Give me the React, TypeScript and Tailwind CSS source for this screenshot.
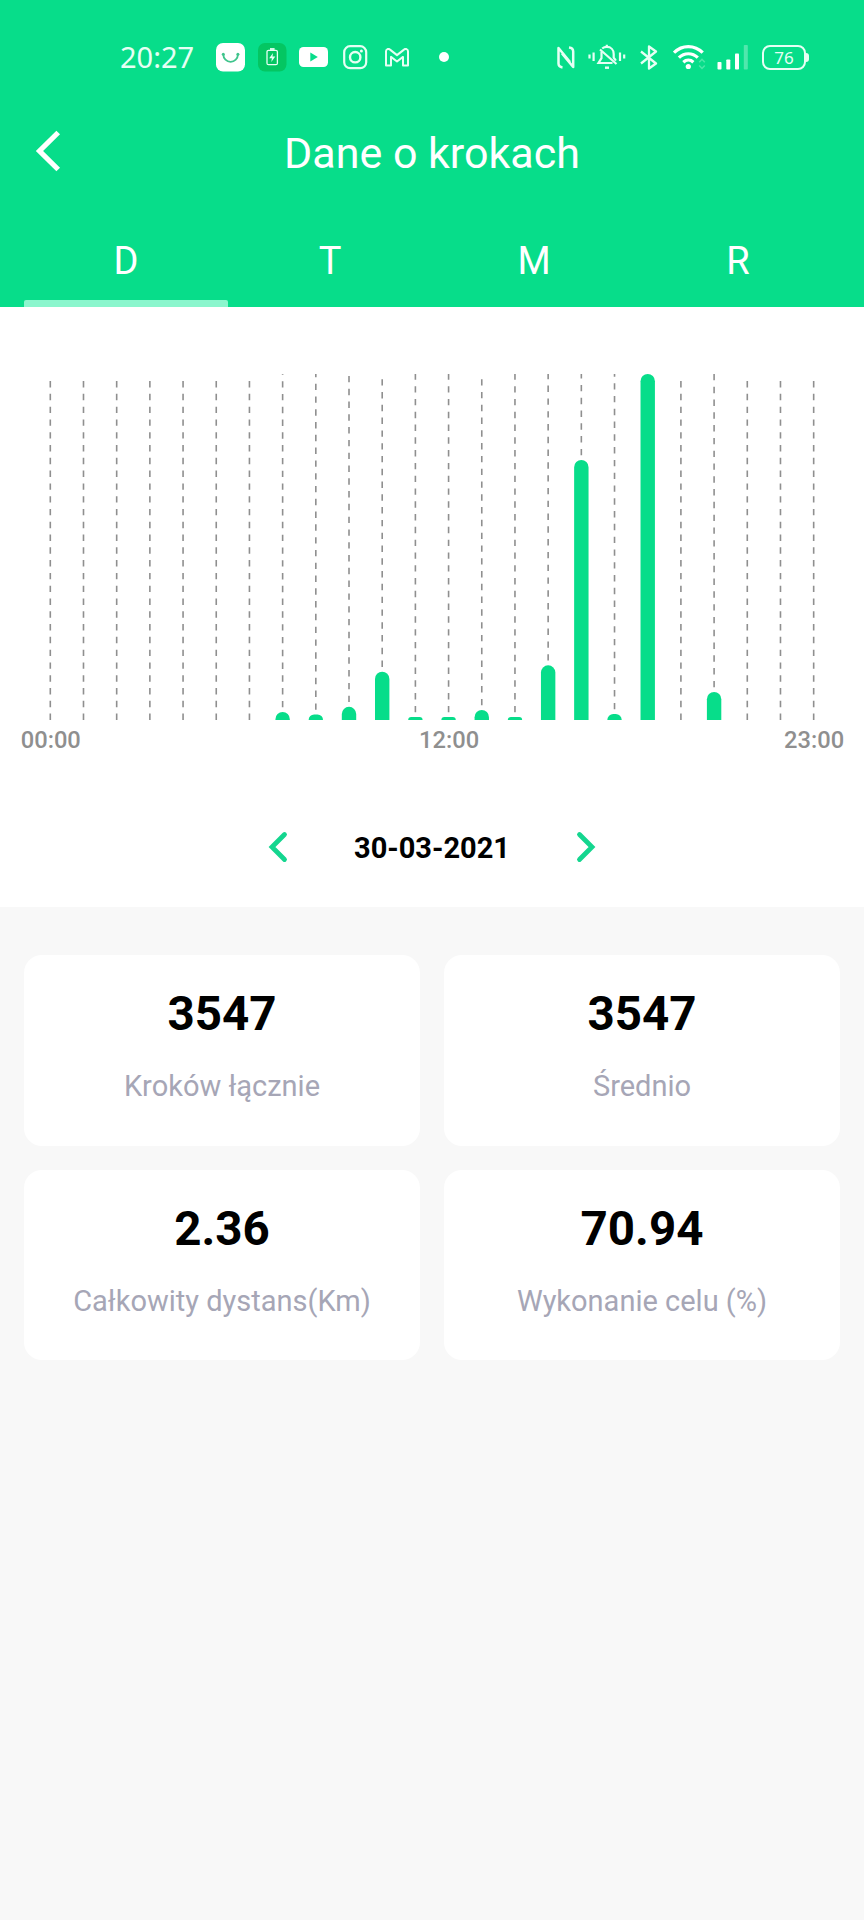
const hourlyBars = [
  0, 0, 0, 0, 0, 0, 0, 8, 5.5, 13.2, 48.3, 3, 3, 10, 3, 54.7, 260, 6, 346, 0, 28, 0, 0, 0,
];

const axisLabels = [
  { hour: 0, text: '00:00' },
  { hour: 12, text: '12:00' },
  { hour: 23, text: '23:00' },
];

const tabs = ['D', 'T', 'M', 'R'];

const stats = [
  { value: '3547', label: 'Kroków łącznie' },
  { value: '3547', label: 'Średnio' },
  { value: '2.36', label: 'Całkowity dystans(Km)' },
  { value: '70.94', label: 'Wykonanie celu (%)' },
];

function StatusBar() {
  return (
    <div className="flex h-[114px] items-center pr-[55px] pl-[120px] text-[#e6fff4]">
      <span className="-mt-0.5 w-24 font-['Noto_Sans',sans-serif] text-[29px] leading-none">20:27</span>

      <div className="flex items-center">
        <svg width="29" height="29" viewBox="0 0 29 29">
          <rect width="29" height="28.5" rx="7" fill="#fff" />
          <path d="M7.3 11.5a7.3 7.3 0 0 0 14.6 0" fill="none" stroke="#3fc48c" strokeWidth="1.8" />
          <circle cx="7.3" cy="11.2" r="1.5" fill="#3fc48c" />
          <circle cx="21.9" cy="11.2" r="1.5" fill="#3fc48c" />
        </svg>
        <svg className="ml-[13px]" width="29" height="29" viewBox="0 0 29 29">
          <rect width="28.5" height="28.5" rx="7" fill="#04c662" />
          <rect x="9" y="7.3" width="10.4" height="14.4" rx="1.5" fill="none" stroke="currentColor" strokeWidth="1.3" />
          <path d="M12 6h4.6" stroke="currentColor" strokeWidth="1.8" />
          <path d="M15 10l-3.8 5.2h2.7L13.3 19l4-5.4h-2.8z" fill="currentColor" />
        </svg>
        <svg className="ml-3" width="29" height="20" viewBox="0 0 29 20">
          <rect width="29" height="20" rx="4.5" fill="#fff" />
          <path d="M11.3 5.6v8.8l7.5-4.4z" fill="#07dd8a" />
        </svg>
        <svg className="ml-[15px]" width="25" height="25" viewBox="0 0 25 25" fill="none" stroke="currentColor">
          <rect x="1.2" y="1.2" width="22" height="22" rx="6" strokeWidth="2.2" />
          <circle cx="12.2" cy="12.2" r="5.2" strokeWidth="2.4" />
          <circle cx="18.4" cy="6" r="1.5" fill="currentColor" stroke="none" />
        </svg>
        <svg className="ml-[17px]" width="24" height="19" viewBox="0 0 24 19" fill="none" stroke="currentColor" strokeWidth="2" strokeLinejoin="round">
          <path d="M1 3.2C1 1 3.5.3 5 1.6l7 5.5 7-5.5c1.5-1.3 4-.6 4 1.6v14.3h-5V8.9l-6 4.6-6-4.6v8.6H1z" />
        </svg>
        <span className="ml-[30px] size-[10px] rounded-full bg-white" />
      </div>

      <div className="ml-auto flex items-center">
        <svg width="19" height="23" viewBox="0 0 19 23" fill="none" stroke="currentColor" strokeWidth="2.5" strokeLinejoin="round">
          <path d="M5.5 21.4C2.5 21 1.5 20 1.5 17.5V2L13 16" />
          <path d="M12 1.6c3.2.4 4.2 1.4 4.2 3.9V21L5 7.5" />
        </svg>
        <svg className="ml-[12px]" width="38" height="26" viewBox="0 0 38 26" fill="none" stroke="currentColor" strokeWidth="2.2">
          <path d="M1.5 10.5v4M5.6 8.5V17M32 8.5V17M36.2 10.5v4" />
          <path d="M14.2 4.5c1.2-1 2.8-1.600 4.600-1.600 4.200 0 6.900 3 6.900 7v3.800l2.200 3" />
          <path d="M18.8 3V.8M12 5.500L28.500 20" />
          <path d="M13.500 7.500v6.700L10.500 19h14" />
          <path d="M17 23.700h4" strokeWidth="2.4" />
        </svg>
        <svg className="ml-[14px]" width="18" height="25" viewBox="0 0 18 25" fill="none" stroke="currentColor" strokeWidth="2.3" strokeLinejoin="round">
          <path d="M1 6.5l15 12-7 5v-22l7 5-15 12" />
        </svg>
        <svg className="ml-[15px]" width="33" height="26" viewBox="0 0 33 26" fill="none" stroke="#fff" strokeWidth="3.2">
          <path d="M1 8.7c8-8.2 20.7-8.2 28.7 0" />
          <path d="M5.9 13.7c5.4-5.3 13.5-5.3 18.900 0" />
          <path d="M10.3 18.2c3-2.7 7.100-2.700 10.100 0" />
          <circle cx="15.3" cy="22.5" r="2.6" fill="#fff" stroke="none" />
          <path d="M26.2 18.3l2.8-3 2.8 3M26.200 21.500l2.800 3 2.800-3" stroke="#4ae8a8" strokeWidth="1.5" />
        </svg>
        <svg className="ml-[11px]" width="31" height="26" viewBox="0 0 31 26" fill="#fff">
          <rect x="0.5" y="18" width="4" height="7.5" rx="0.8" />
          <rect x="9.3" y="15.5" width="4" height="10" rx="0.8" />
          <rect x="18" y="9.5" width="4" height="16" rx="0.8" />
          <rect x="26.8" y="1" width="4" height="24.5" rx="0.8" opacity="0.3" />
        </svg>
        <div className="ml-[14px] flex h-[25px] w-[44px] items-center justify-center rounded-[8px] border-[2.5px] border-current font-['Noto_Sans',sans-serif] text-[17px] leading-none">
          76
        </div>
        <span className="h-[9px] w-[3px] rounded-r-sm bg-current" />
      </div>
    </div>
  );
}

function StepsChart() {
  const firstX = 50.3;
  const step = 33.19;
  const top = 67;
  const bottom = 413;
  const barWidth = 14.4;

  return (
    <svg className="block w-full" viewBox="0 0 864 460" height="460">
      {hourlyBars.map((height, hour) => {
        const x = firstX + hour * step;
        const lineStart = height > 0 ? bottom - height - 4.7 : bottom;
        const lineEnd = height > 0 ? top : top + 6;
        const r = Math.min(height, barWidth / 2);
        return (
          <g key={hour}>
            {lineStart > lineEnd && (
              <path d={`M${x} ${lineStart}V${lineEnd}`} stroke="#8f8f8f" strokeWidth="1.6" strokeDasharray="6.4 6.39" />
            )}
            {height > 0 && (
              <path
                d={`M${x - barWidth / 2} ${bottom}v${r - height}a${r} ${r} 0 0 1 ${r} ${-r}h${barWidth - 2 * r}a${r} ${r} 0 0 1 ${r} ${r}V${bottom}z`}
                fill="#07dd8a"
              />
            )}
          </g>
        );
      })}
      {axisLabels.map(({ hour, text }) => (
        <text
          key={text}
          x={firstX + hour * step + 0.5}
          y="440.5"
          textAnchor="middle"
          className="fill-[#8f8f8f] text-[23.7px] font-medium"
        >
          {text}
        </text>
      ))}
    </svg>
  );
}

export default function App() {
  return (
    <div className="flex min-h-[1920px] w-[864px] flex-col bg-[#f8f8f8] font-[Roboto,sans-serif]">
      <header className="h-[307px] bg-[#07dd8a] text-white">
        <StatusBar />
        <div className="grid h-[78px] grid-cols-[1fr_auto_1fr] items-center px-[35px]">
          <button aria-label="Wstecz" className="w-fit pb-1">
            <svg width="27" height="42" viewBox="0 0 27 42" fill="none" stroke="#fff" strokeWidth="5.2">
              <path d="M23.2 2.5L4.5 21l18.7 18.5" />
            </svg>
          </button>
          <h1 className="text-[43px] leading-none">Dane o krokach</h1>
        </div>
        <nav className="flex h-[115px] px-6">
          {tabs.map((tab, i) => (
            <button key={tab} className="flex flex-1 flex-col items-center justify-end">
              <span className="mb-[17px] text-[38px] leading-[44px]">{tab}</span>
              <span className={i === 0 ? 'h-[7px] w-full rounded-t-[2px] bg-[#8bf6cd]' : 'h-[7px] w-full'} />
            </button>
          ))}
        </nav>
      </header>

      <section className="h-[600px] bg-white">
        <StepsChart />
        <div className="flex items-start justify-center pt-[64px]">
          <button aria-label="Poprzedni dzień">
            <svg width="20" height="32" viewBox="0 0 20 32" fill="none" stroke="#14d68f" strokeWidth="4.8" strokeLinecap="round">
              <path d="M16.5 3.5L4 16l12.5 12.5" />
            </svg>
          </button>
          <time className="w-[288px] text-center text-[29px] leading-[34px] font-bold text-black">30-03-2021</time>
          <button aria-label="Następny dzień">
            <svg width="20" height="32" viewBox="0 0 20 32" fill="none" stroke="#14d68f" strokeWidth="4.8" strokeLinecap="round">
              <path d="M3.5 3.5L16 16 3.5 28.5" />
            </svg>
          </button>
        </div>
      </section>

      <main className="grid grid-cols-2 gap-6 px-6 pt-12">
        {stats.map(({ value, label }) => (
          <div key={label} className="flex h-[190.5px] flex-col items-center rounded-[18px] bg-white">
            <strong className="mt-[31px] text-[47.5px] leading-[56px] font-bold text-black">{value}</strong>
            <span className="mt-[27px] text-[29px] leading-[34px] text-[#a6a6b6]">{label}</span>
          </div>
        ))}
      </main>
    </div>
  );
}
